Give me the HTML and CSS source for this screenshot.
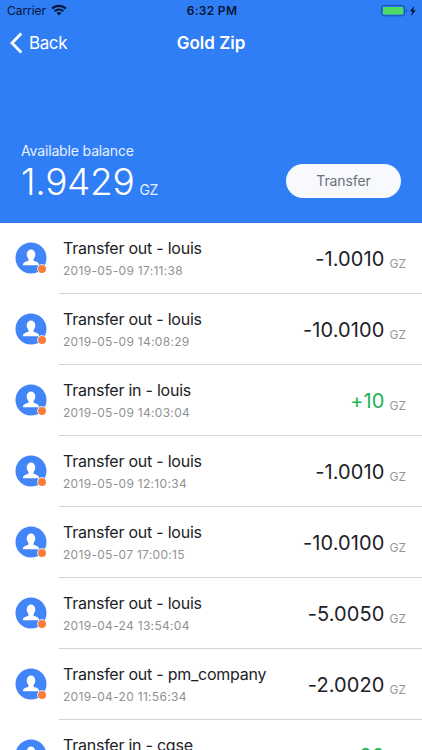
FILE: index.html
```html
<!DOCTYPE html>
<html lang="en">
<head>
    <meta charset="UTF-8">
    <meta name="viewport" content="width=device-width, initial-scale=1.0">
    <title>Gold Zip</title>
    <link rel="stylesheet" href="styles.css">
</head>
<body>
    <header class="header">
        <div class="status-bar">
            <div class="carrier">
                <span>Carrier</span>
                <svg class="wifi" viewBox="0 0 16 12">
                    <path d="M1.2 4.6a9.7 9.7 0 0 1 13.6 0" fill="none" stroke="#061533" stroke-width="2.2"/>
                    <path d="M3.7 7.2a6.1 6.1 0 0 1 8.6 0" fill="none" stroke="#061533" stroke-width="2"/>
                    <path d="M8 11.6L5.5 9.1a3.6 3.6 0 0 1 5 0z" fill="#061533"/>
                </svg>
            </div>
            <div class="time">6:32 PM</div>
            <div class="battery">
                <svg width="36" height="12" viewBox="0 0 36 12">
                    <rect x=".6" y=".6" width="23" height="10.2" rx="2.3" fill="none" stroke="#1b4fa5"/>
                    <rect x="2" y="2" width="20.2" height="7.4" rx="1" fill="#4cd964"/>
                    <path d="M25 4v3.6c1.6-.6 1.6-3 0-3.6z" fill="#1b4fa5"/>
                    <path d="M33.2 1l-4.4 5.3h2.5L30.2 11l4.6-5.8h-2.6z" fill="#061533"/>
                </svg>
            </div>
        </div>

        <nav class="nav">
            <a class="back">
                <svg width="13" height="22" viewBox="0 0 13 22">
                    <path d="M11.3 1.5L2 11l9.3 9.5" fill="none" stroke="#fff" stroke-width="2.8"/>
                </svg>
                <span>Back</span>
            </a>
            <h1 class="title">Gold Zip</h1>
        </nav>

        <div class="balance">
            <div>
                <div class="balance-label">Available balance</div>
                <div class="balance-value">1.9429<span class="balance-unit">GZ</span></div>
            </div>
            <button class="transfer-btn">Transfer</button>
        </div>
    </header>

    <ul class="list" id="list"></ul>

    <script src="script.js"></script>
</body>
</html>
```

FILE: styles.css
```css
* {
    box-sizing: border-box;
}

body {
    width: 422px;
    height: 750px;
    margin: 0;
    overflow: hidden;
    background: #fff;
    color: #212126;
    font-family: Inter, "Liberation Sans", sans-serif;
}

.header {
    display: flex;
    flex-direction: column;
    height: 223px;
    background: #307ef6;
    color: #fff;
}

.status-bar {
    display: grid;
    grid-template-columns: 1fr auto 1fr;
    align-items: center;
    height: 21px;
    padding: 0 5px 0 7px;
    color: #061533;
    font-size: 12px;
}

.carrier {
    display: flex;
    align-items: center;
    gap: 5px;
    letter-spacing: -0.05px;
}

.wifi {
    width: 16px;
    height: 12px;
    margin-top: -2px;
}

.time {
    font-weight: 600;
    letter-spacing: 0.3px;
}

.battery {
    display: flex;
    justify-content: flex-end;
}

.nav {
    display: grid;
    grid-template-columns: 1fr auto 1fr;
    align-items: center;
    height: 43px;
    padding: 0 10px;
}

.back {
    display: flex;
    align-items: center;
    gap: 6px;
    font-size: 17px;
    letter-spacing: -0.4px;
}

.title {
    margin: 0;
    font-size: 17px;
    font-weight: 600;
    letter-spacing: 0;
}

.balance {
    display: flex;
    justify-content: space-between;
    align-items: flex-end;
    margin-top: auto;
    padding: 0 21px 18px;
}

.balance-label {
    font-size: 14px;
    line-height: 18px;
    letter-spacing: -0.15px;
    color: #e6f0ff;
}

.balance-value {
    margin-bottom: -7px;
    font-size: 37px;
    line-height: 44px;
    font-weight: 300;
    letter-spacing: -0.3px;
}

.balance-unit {
    margin-left: 5px;
    font-size: 14px;
    font-weight: 400;
    color: #e6f0ff;
}

.transfer-btn {
    width: 115px;
    height: 34px;
    margin-bottom: 7px;
    padding: 0 0 1px;
    border: none;
    border-radius: 17px;
    background: #f7f9fc;
    color: #6d727c;
    font-family: inherit;
    font-size: 14px;
    letter-spacing: -0.1px;
}

.list {
    height: 527px;
    margin: 0;
    padding: 0;
    overflow: hidden;
    list-style: none;
}

.row {
    display: flex;
    height: 71px;
    padding-left: 15px;
}

.avatar {
    flex: none;
    width: 33px;
    height: 33px;
    margin: 19px 11px 0 0;
}

.row-body {
    display: flex;
    flex: 1;
    justify-content: space-between;
    padding: 14px 16px 0 4px;
    border-bottom: 1px solid #d3d3d5;
}

.name {
    font-size: 16px;
    line-height: 22px;
    letter-spacing: -0.24px;
}

.date {
    margin-top: 4px;
    font-size: 12px;
    line-height: 15px;
    letter-spacing: 0.3px;
    color: #919194;
}

.amount {
    display: flex;
    height: 28px;
    margin-top: 8px;
    font-size: 20px;
    line-height: 28px;
    letter-spacing: 0.1px;
}

.amount.in {
    color: #20b151;
}

.unit {
    margin-left: 5px;
    padding-top: 5px;
    font-size: 12px;
    letter-spacing: 0;
    color: #97979b;
}
```

FILE: script.js
```js
const transactions = [
    { name: 'Transfer out - louis', date: '2019-05-09 17:11:38', amount: '-1.0010' },
    { name: 'Transfer out - louis', date: '2019-05-09 14:08:29', amount: '-10.0100' },
    { name: 'Transfer in - louis', date: '2019-05-09 14:03:04', amount: '+10' },
    { name: 'Transfer out - louis', date: '2019-05-09 12:10:34', amount: '-1.0010' },
    { name: 'Transfer out - louis', date: '2019-05-07 17:00:15', amount: '-10.0100' },
    { name: 'Transfer out - louis', date: '2019-04-24 13:54:04', amount: '-5.0050' },
    { name: 'Transfer out - pm_company', date: '2019-04-20 11:56:34', amount: '-2.0020' },
    { name: 'Transfer in - cgse', date: '', amount: '+20' }
];

const avatar = `
    <svg class="avatar" viewBox="0 0 33 33">
        <circle cx="16" cy="16" r="15.5" fill="#4285f8"/>
        <ellipse cx="16" cy="12.6" rx="4.3" ry="5" fill="#fff"/>
        <path d="M13.5 15h5v3.4c1.6 1.1 5.5 1.5 5.5 4v.9H8v-.9c0-2.5 3.9-2.9 5.5-4z" fill="#fff"/>
        <circle cx="27" cy="27" r="4.8" fill="#fff"/>
        <circle cx="27" cy="27" r="4" fill="#fa7d3c"/>
    </svg>`;

document.getElementById('list').innerHTML = transactions.map(t => `
    <li class="row">
        ${avatar}
        <div class="row-body">
            <div>
                <div class="name">${t.name}</div>
                <div class="date">${t.date}</div>
            </div>
            <div class="amount ${t.amount[0] === '+' ? 'in' : ''}">${t.amount}<span class="unit">GZ</span></div>
        </div>
    </li>`).join('');
```
